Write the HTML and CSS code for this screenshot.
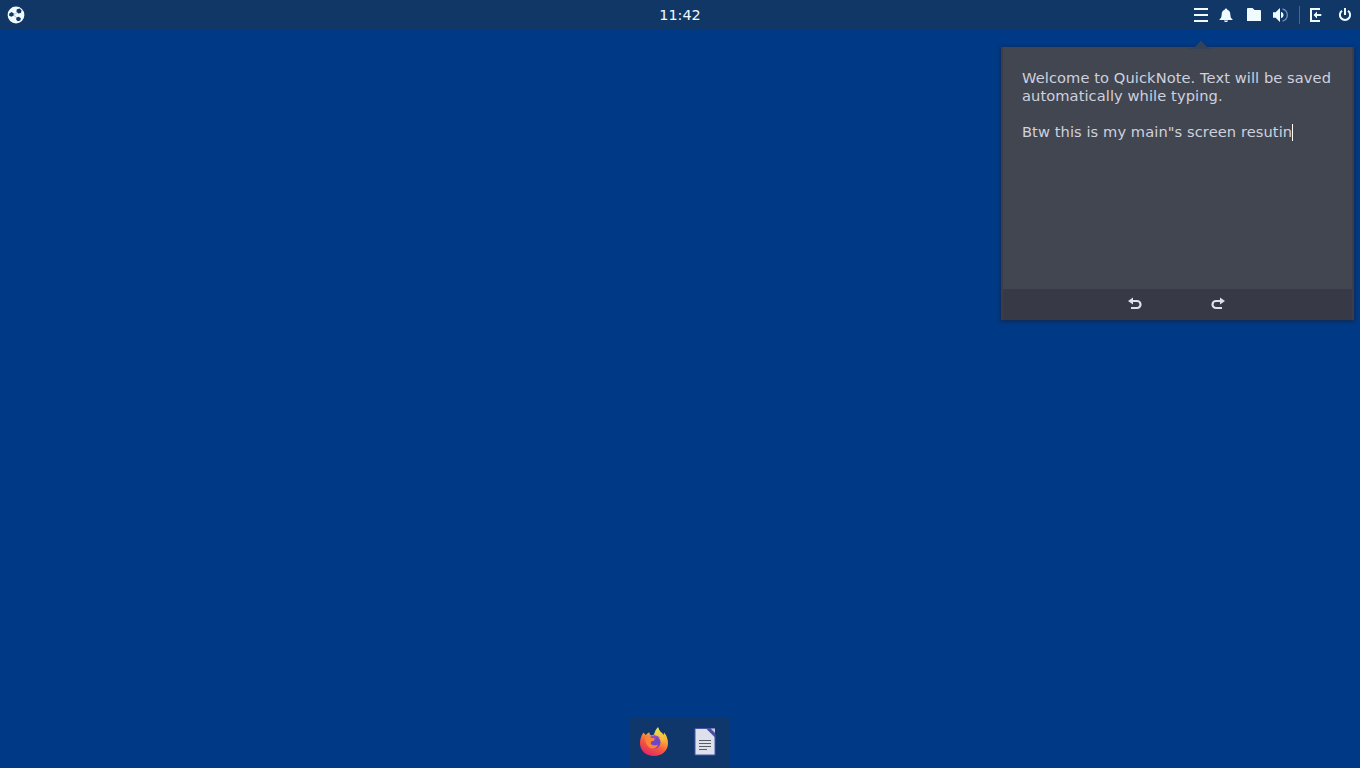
FILE: index.html
```html
<!DOCTYPE html>
<html lang="en">
<head>
    <meta charset="UTF-8">
    <meta name="viewport" content="width=device-width, initial-scale=1.0">
    <title>Desktop</title>
    <link rel="stylesheet" href="styles.css">
</head>
<body>
    <header class="panel">
        <div class="panel-left">
            <svg class="icon" viewBox="0 0 18 18">
                <circle cx="9" cy="9" r="8.4" fill="#f0fbff"/>
                <g fill="#113766">
                    <path d="M9.8 3.2 12.6 2.5 14.6 4.5 13.8 7 11.2 7.4 9.5 5.6z"/>
                    <path d="M2.3 7.4 4.6 6.1 6.8 7.5 6.5 9.8 4.2 10.8 2 9.6z"/>
                    <path d="M9.3 11.6 11.8 10.7 13.9 12.3 13.3 14.5 10.8 15.3 9.2 13.8z"/>
                </g>
                <path d="M6.8 8.2Q9 8 10 6.5M6.4 9.5Q9 10 9.7 12.2" fill="none" stroke="#6f8bab" stroke-width=".5"/>
            </svg>
        </div>
        <div class="clock">11:42</div>
        <div class="tray">
            <svg class="icon menu" viewBox="0 0 16 16"><path d="M1 1h14v2H1zM1 7h14v2H1zM1 13h14v2H1z"/></svg>
            <svg class="icon bell" viewBox="0 0 16 16"><path d="M8 1.6c.8 0 1.2.6 1.3 1.2C11.6 3.5 12.2 5.3 12.4 8c.2 2.5.7 3.2 2 4v1H1.6v-1c1.3-.8 1.8-1.5 2-4 .2-2.7.8-4.5 3.1-5.2.1-.6.5-1.2 1.3-1.2zM6 13.4h4c-.2 1.1-1 1.7-2 1.7s-1.8-.6-2-1.7z"/></svg>
            <svg class="icon folder" viewBox="0 0 16 16"><path d="M1 2q0-1 1-1h4.5L8.6 3H14q1 0 1 1v10H1z"/></svg>
            <svg class="icon volume" viewBox="0 0 16 16">
                <path d="M1 5.2h2.6L8 1v14l-4.4-4.2H1zM9 4.7q2.6.8 2.6 3.3T9 11.3z"/>
                <path d="M10.5 1.8q4.8 1.6 4.8 6.2t-4.8 6.2" fill="none" stroke="#6f8bb3" stroke-width="1.4"/>
            </svg>
            <span class="separator"></span>
            <svg class="icon logout" viewBox="0 0 16 16">
                <path d="M2 1h10v2H4v10h8v2H2z"/>
                <path d="M5.5 8 9 4.6V7h4.3v2H9v2.4z"/>
            </svg>
            <svg class="icon power" viewBox="0 0 16 16">
                <path d="M5 3.7a5.1 5.1 0 1 0 6 0" fill="none" stroke="#f0fbff" stroke-width="2"/>
                <path d="M7 1h2v7H7z"/>
            </svg>
        </div>
    </header>

    <main class="desktop">
        <div class="note">
            <svg class="note-arrow" viewBox="0 0 30 10"><path d="M0 10 6 9Q10 8 15 1.5 20 8 24 9L30 10z"/></svg>
            <div class="note-text">Welcome to QuickNote. Text will be saved automatically while typing.

Btw this is my main"s screen resutin<span class="caret"></span></div>
            <div class="note-actions">
                <svg class="icon" viewBox="0 0 16 16">
                    <path d="M5 5h5a3.5 3.5 0 0 1 0 7H4" fill="none" stroke="#dfe0ee" stroke-width="2.2"/>
                    <path d="M1 5 6 1.5v7z"/>
                </svg>
                <svg class="icon" viewBox="0 0 16 16">
                    <path d="M11 5H6a3.5 3.5 0 0 0 0 7H12" fill="none" stroke="#dfe0ee" stroke-width="2.2"/>
                    <path d="M15 5 10 1.5v7z"/>
                </svg>
            </div>
        </div>
    </main>

    <footer class="dock">
        <svg class="app" viewBox="0 0 32 32">
            <defs>
                <linearGradient id="fox" x1=".8" y1="0" x2=".3" y2="1">
                    <stop offset="0" stop-color="#f5e64c"/>
                    <stop offset=".35" stop-color="#f9a63a"/>
                    <stop offset=".65" stop-color="#f6583e"/>
                    <stop offset="1" stop-color="#e32468"/>
                </linearGradient>
                <linearGradient id="tail" x1="0" y1="0" x2="0" y2="1">
                    <stop offset="0" stop-color="#dfe65a"/>
                    <stop offset=".6" stop-color="#f9b93a"/>
                    <stop offset="1" stop-color="#ff7139" stop-opacity="0"/>
                </linearGradient>
            </defs>
            <path d="M5.5 6.5Q6.6 8 8 9 9.5 7 11.3 6.3 11.2 8.2 13 9.4L17.5 8Q17 4 20 1.2 21 5.2 24.5 7.5L25.7 9 26 6.5Q30 11 30 17.2C30 24.7 24 30 16 30S2 24.7 2 17Q2 11 5.5 6.5z" fill="url(#fox)"/>
            <path d="M16 8Q17 4 20 1.2 21 5.2 24.5 8 28.5 12 26.5 20L22 22Q23.5 13 16 8z" fill="url(#tail)"/>
            <circle cx="16.2" cy="16.3" r="6.3" fill="#7246c2"/>
            <path d="M12 11Q17 7 22.5 12 18 10.8 17.5 13z" fill="#934ac6"/>
            <path d="M7 11.5Q11 9.8 13.3 11.8 17 11.8 16.8 13.4 15.8 15.2 13.2 15.5 12 17.7 14 18.8 17 20 20 18.4 18.5 23 13.5 22.4 7.5 21 7 11.5z" fill="#f98536"/>
        </svg>
        <svg class="app" viewBox="0 0 32 32">
            <path d="M6 2.5h14.5L26 8V29H6z" fill="#dce1eb" stroke="#4856a5" stroke-width="1"/>
            <path d="M17 2.5H26V11.5z" fill="#4a50a0"/>
            <path d="M21.5 2.5H26V7z" fill="#c2c8e6"/>
            <path d="M10 14.5h12M10 17.5h12M10 20.5h12M10 23.5h8" stroke="#5a5c62" stroke-width="1.2"/>
        </svg>
    </footer>
</body>
</html>
```
FILE: styles.css
```css
* {
    margin: 0;
    padding: 0;
    box-sizing: border-box;
}

body {
    display: flex;
    flex-direction: column;
    height: 100vh;
    overflow: hidden;
    font-family: "DejaVu Sans", sans-serif;
    font-size: 14.67px;
    background-color: #003a87;
}

/* Top panel */
.panel {
    display: grid;
    grid-template-columns: 1fr auto 1fr;
    align-items: center;
    height: 30px;
    padding: 0 7px;
    background-color: #113766;
    color: #f0fbff;
}

.panel-left {
    display: flex;
}

.panel-left .icon {
    width: 18px;
    height: 18px;
}

.clock {
    font-size: 14.4px;
    line-height: 30px;
}

.tray {
    display: flex;
    align-items: center;
    justify-content: flex-end;
}

.icon {
    display: block;
    width: 16px;
    height: 16px;
    fill: #f0fbff;
}

.bell {
    margin-left: 9px;
}

.folder {
    margin-left: 12px;
}

.volume {
    margin-left: 10px;
}

.separator {
    width: 1px;
    height: 18px;
    margin: 0 8px 0 11px;
    background-color: #426798;
}

.power {
    margin-left: 13px;
}

/* Note popup */
.desktop {
    display: flex;
    flex: 1;
    align-items: flex-start;
    justify-content: flex-end;
    padding: 17px 6px 0 0;
}

.note {
    position: relative;
    width: 353px;
    height: 273px;
    padding: 0 2px;
    display: flex;
    flex-direction: column;
    background-color: #3b3e49;
    box-shadow: 0 1px 4px 1px rgba(20, 35, 65, 0.7);
}

.note-arrow {
    position: absolute;
    top: -8px;
    left: 185px;
    width: 30px;
    height: 10px;
    fill: #35435a;
}

.note-text {
    flex: 1;
    padding: 22px 19px;
    background-color: #424650;
    color: #ced1df;
    line-height: 18px;
    letter-spacing: 0.07px;
    white-space: pre-wrap;
}

.caret {
    display: inline-block;
    width: 1px;
    height: 17px;
    margin-right: -1px;
    vertical-align: -4px;
    background-color: #ffffff;
}

.note-actions {
    display: flex;
    align-items: center;
    justify-content: center;
    gap: 67px;
    height: 31px;
    padding: 0 3px 2px 0;
    background-color: #383947;
}

.note-actions .icon {
    fill: #dfe0ee;
}

/* Dock */
.dock {
    display: flex;
    align-items: center;
    justify-content: space-between;
    width: 100px;
    height: 51px;
    margin: 0 auto;
    padding: 0 9px 2px 8px;
    background-color: #10376c;
}

.app {
    width: 32px;
    height: 32px;
}
```
